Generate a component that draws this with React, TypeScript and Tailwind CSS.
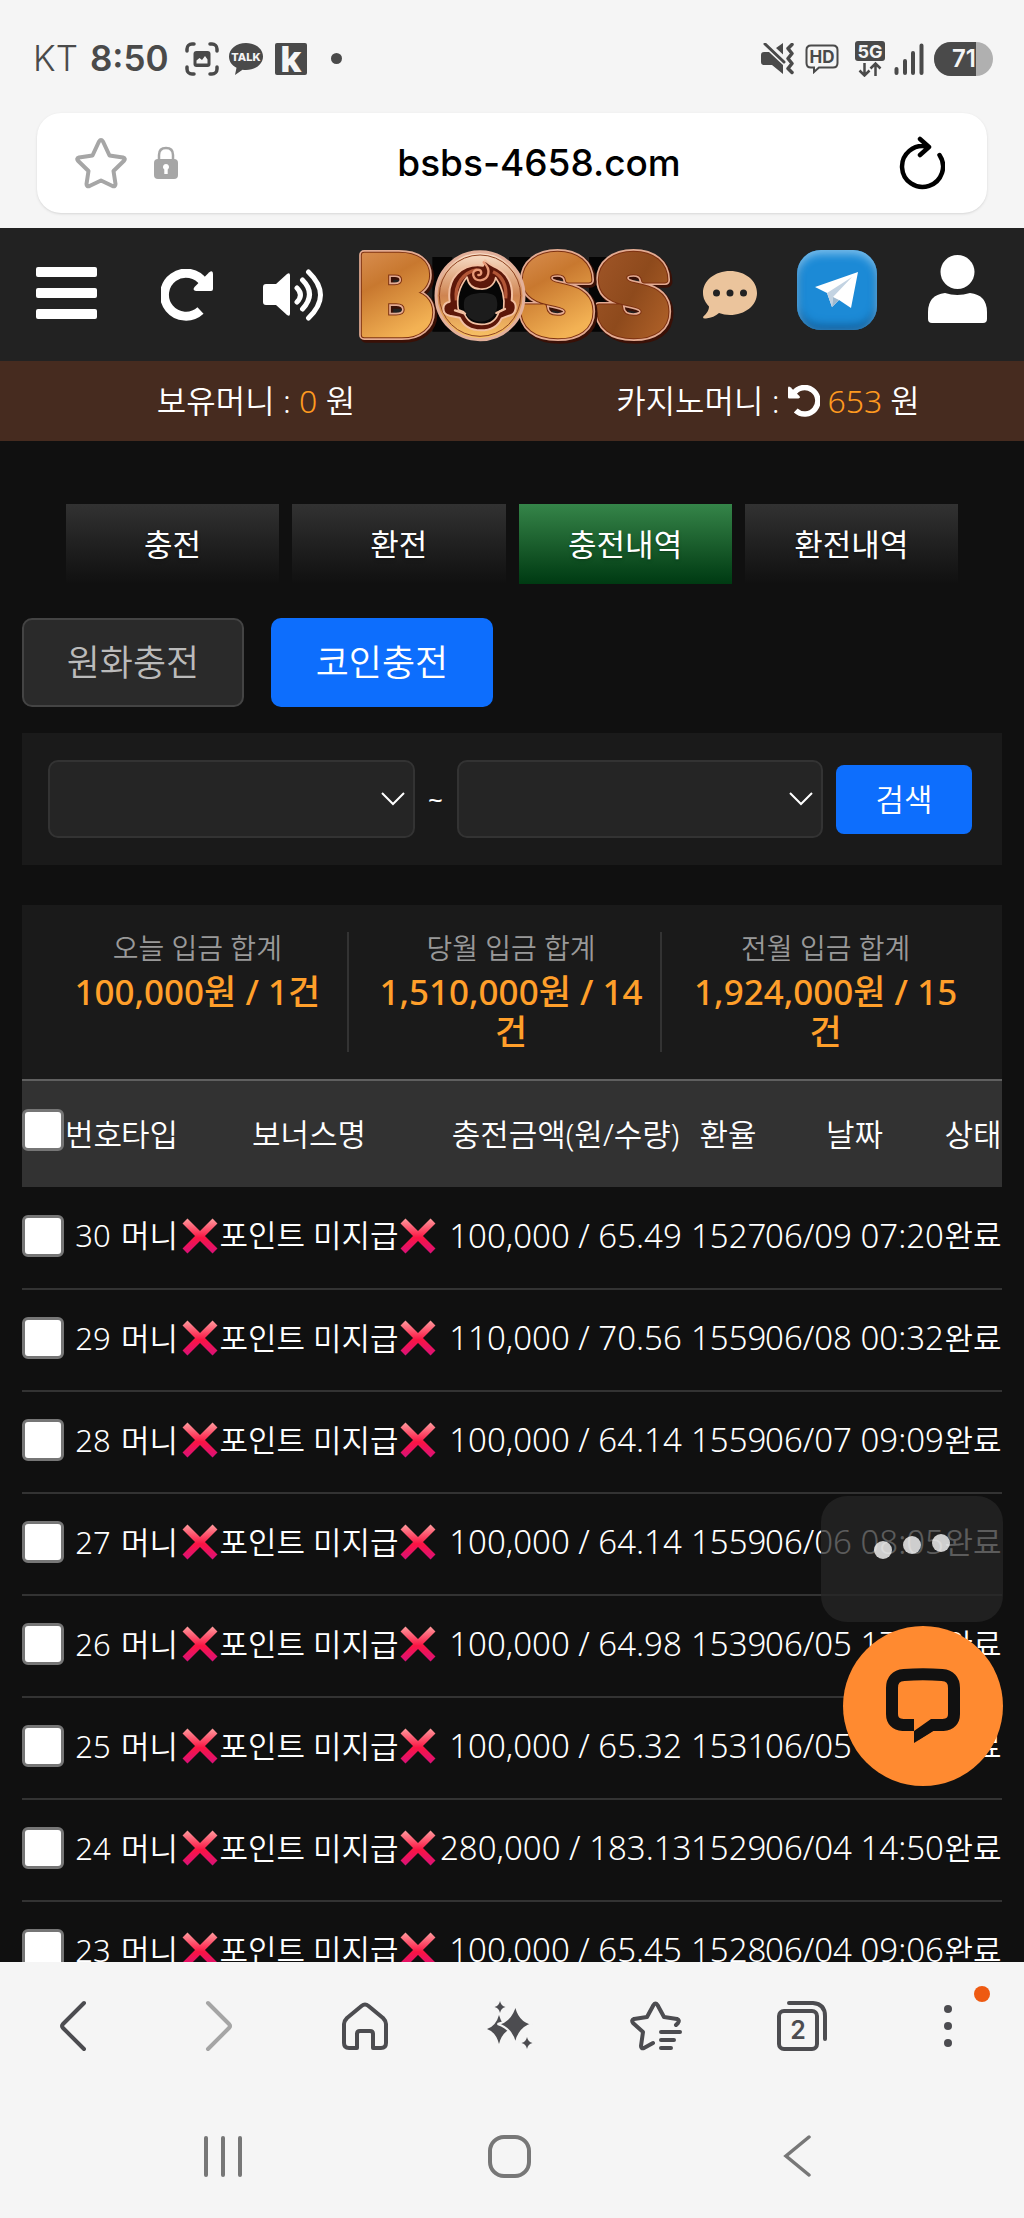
import * as React from 'react';
import clsx from 'clsx';

const tabs = ['충전', '환전', '충전내역', '환전내역'];

const totals = [
  { label: '오늘 입금 합계', value: '100,000원 / 1건' },
  { label: '당월 입금 합계', value: '1,510,000원 / 14건' },
  { label: '전월 입금 합계', value: '1,924,000원 / 15건' },
];

const deposits = [
  { no: 30, amount: '100,000 / 65.49', rate: '1527', date: '06/09 07:20' },
  { no: 29, amount: '110,000 / 70.56', rate: '1559', date: '06/08 00:32' },
  { no: 28, amount: '100,000 / 64.14', rate: '1559', date: '06/07 09:09' },
  { no: 27, amount: '100,000 / 64.14', rate: '1559', date: '06/06 08:05' },
  { no: 26, amount: '100,000 / 64.98', rate: '1539', date: '06/05 17:20' },
  { no: 25, amount: '100,000 / 65.32', rate: '1531', date: '06/05 10:12' },
  { no: 24, amount: '280,000 / 183.13', rate: '1529', date: '06/04 14:50' },
  { no: 23, amount: '100,000 / 65.45', rate: '1528', date: '06/04 09:06' },
];

export default function App() {
  return (
    <div className="flex h-screen flex-col overflow-hidden bg-[#f5f5f5] font-['Noto_Sans','Noto_Sans_CJK_KR',sans-serif]">
      <StatusBar />
      <AddressBar />
      <div className="relative min-h-0 flex-1 overflow-hidden bg-[#101010] text-white">
        <SiteHeader />
        <Balances />
        <main className="px-[22px] pt-[63px]">
          <Tabs />
          <div className="mt-[34px] flex gap-[27px]">
            <button className="h-[89px] w-[222px] rounded-[10px] border-2 border-[#444] bg-[#2a2a2a] text-[36px] font-[350] text-[#bbb]">
              원화충전
            </button>
            <button className="h-[89px] w-[222px] rounded-[10px] bg-[#0d6efd] text-[36px] font-[350]">
              코인충전
            </button>
          </div>
          <SearchForm />
          <Totals />
          <DepositTable />
        </main>
        <ChatWidget />
      </div>
      <BrowserToolbar />
      <SystemNav />
    </div>
  );
}

function StatusBar() {
  return (
    <div className="flex h-[113px] shrink-0 items-center justify-between pt-1 pr-[31px] pl-[33px] font-['Inter',sans-serif] text-[#4a4a4a]">
      <div className="flex items-center">
        <span className="text-[35px] font-light">KT</span>
        <span className="ml-3 text-[35px] font-semibold">8:50</span>
        <svg className="ml-4" width="34" height="34" viewBox="0 0 34 34" fill="none" stroke="currentColor" strokeWidth="3.5" strokeLinecap="round">
          <path d="M2 9V7a5 5 0 0 1 5-5h2M25 2h2a5 5 0 0 1 5 5v2M32 25v2a5 5 0 0 1-5 5h-2M9 32H7a5 5 0 0 1-5-5v-2" />
          <rect x="8.500" y="9" width="17" height="16" rx="3" fill="currentColor" stroke="none" />
          <path d="M11.500 21.500v-3l3-2.500 2.500 2 3-4 2.500 3.500v4z" fill="#f5f5f5" stroke="none" />
        </svg>
        <svg className="ml-[9px]" width="36" height="34" viewBox="0 0 36 34">
          <path d="M18 1C8.300 1 1 7 1 14.500c0 5 3 9 7.500 11.300L7 33l7.500-5.300c1.100.2 2.300.3 3.500.3 9.700 0 17-6 17-13.500S27.700 1 18 1z" fill="currentColor" />
          <text x="18" y="19" textAnchor="middle" fontSize="11" fontWeight="800" fill="#f5f5f5">TALK</text>
        </svg>
        <svg className="ml-[11px]" width="32" height="56" viewBox="0 -12 32 56">
          <rect width="32" height="32" rx="2" fill="currentColor" />
          <text x="16" y="29" textAnchor="middle" fontSize="36" fontWeight="800" fill="#f5f5f5">k</text>
        </svg>
        <span className="ml-6 size-[11px] rounded-full bg-[#4a4a4a]"></span>
      </div>
      <div className="flex items-center">
        <svg width="34" height="32" viewBox="0 0 34 32">
          <path d="M0 12q0-3 3-3h5L22 22v9L11 22H3q-3 0-3-3zM15 5l7-5v11.500z" fill="currentColor" />
          <path d="M4 1l19 18" stroke="currentColor" strokeWidth="3" strokeLinecap="round" />
          <path d="M31 1.500l-4 4 4 5-4 5 4 5-4 5 4 4" fill="none" stroke="currentColor" strokeWidth="3.500" strokeLinecap="round" strokeLinejoin="round" />
        </svg>
        <svg className="ml-[10px]" width="34" height="30" viewBox="0 0 34 30" fill="none" stroke="currentColor">
          <path d="M6 1.500h22q4.500 0 4.500 4.500v13q0 4.500-4.500 4.500H14L9 28v-4.500H6q-4.500 0-4.500-4.500V6Q1.500 1.500 6 1.500z" strokeWidth="2" />
          <text x="17" y="18.500" textAnchor="middle" fontSize="17" fontWeight="700" fill="currentColor" stroke="none">HD</text>
        </svg>
        <svg className="ml-4" width="30" height="36" viewBox="0 0 30 36">
          <rect width="30" height="20" rx="3" fill="currentColor" />
          <text x="15" y="16.500" textAnchor="middle" fontSize="18" fontWeight="700" fill="#f5f5f5">5G</text>
          <path d="M9.500 22v12M4.500 29.500l5 5 5-5M20.500 35V23M15.500 27.500l5-5 5 5" fill="none" stroke="currentColor" strokeWidth="2.500" />
        </svg>
        <svg className="ml-[9px]" width="30" height="32" viewBox="0 0 30 32" stroke="currentColor" strokeWidth="4" strokeLinecap="round">
          <path d="M2.500 26v4M11 18v12M19 10v20M27.500 2.500V30" />
        </svg>
        <div className="ml-[10px] flex h-[34px] w-[59px] overflow-hidden rounded-full bg-[#b0b0b0]">
          <span className="flex w-[42px] items-center justify-end bg-[#4a4a4a] text-[24px] leading-8 font-semibold text-[#f5f5f5]">71</span>
        </div>
      </div>
    </div>
  );
}

function AddressBar() {
  return (
    <div className="shrink-0 px-[37px] pb-[15px]">
      <div className="flex h-[100px] items-center rounded-[24px] bg-white px-[38px] shadow-sm">
        <button aria-label="즐겨찾기" className="text-[#a6a6a6]">
          <svg width="52" height="52" viewBox="0 0 52 52" fill="none" stroke="currentColor" strokeWidth="4" strokeLinejoin="round">
            <path d="M24 4.500q2-3 4 0l6.500 14 13.500 2q3 .8 1 3.300L38.500 34l2 13q0 3-3 2L26 43.500 14.500 49q-3 1-3-2l2-13L3 23.800q-2-2.500 1-3.300l13.500-2z" />
          </svg>
        </button>
        <svg className="ml-[26px] text-[#a6a6a6]" width="26" height="34" viewBox="0 0 26 34">
          <path d="M6 16V9q0-7 7-7t7 7v7" fill="none" stroke="currentColor" strokeWidth="2.500" />
          <rect x="1" y="13" width="24" height="20" rx="4" fill="currentColor" />
          <path d="M13 18a3 3 0 0 1 1.700 5.500V28h-3.400v-4.500A3 3 0 0 1 13 18z" fill="#fff" />
        </svg>
        <span className="flex-1 text-center font-['Inter',sans-serif] text-[37px] font-[550] text-black">bsbs-4658.com</span>
        <button aria-label="새로고침" className="mr-1">
          <svg width="46" height="54" viewBox="0 0 46 54" fill="none" stroke="#000" strokeWidth="4.500" strokeLinecap="round" strokeLinejoin="round">
            <path d="M40.500 19A20.500 20.500 0 1 1 28 10.500M21 3l9 8-9 8" />
          </svg>
        </button>
      </div>
    </div>
  );
}

function RotateIcon({ className }: { className?: string }) {
  return (
    <svg viewBox="0 0 52 52" className={className}>
      <path d="M39.500 41.500A21.500 21.500 0 1 1 43 14" fill="none" stroke="currentColor" strokeWidth="9" />
      <path d="M52 5v15q0 2-2 2H35q-4-1-1.500-4L48 3.500q4-3 4 1.500z" fill="currentColor" />
    </svg>
  );
}

function SiteHeader() {
  return (
    <header className="flex h-[133px] items-center bg-[#222] pr-[37px] pl-9">
      <button aria-label="메뉴" className="flex w-[61px] flex-col gap-[11px] pb-1">
        <span className="h-[10px] rounded-xs bg-white"></span>
        <span className="h-[10px] rounded-xs bg-white"></span>
        <span className="h-[10px] rounded-xs bg-white"></span>
      </button>
      <button aria-label="새로고침" className="ml-16">
        <RotateIcon className="size-[52px]" />
      </button>
      <button aria-label="소리" className="ml-[50px]">
        <svg width="62" height="52" viewBox="0 0 62 52">
          <path d="M3 15h10L24 5q3-2 3 1.500v38Q27 48 24 46L13 36H3q-3 0-3-3V18q0-3 3-3z" fill="#fff" />
          <path d="M34 19q7 7 0 14M39.500 11q14 14 0 29M45.500 3q24 23 0 46" fill="none" stroke="#fff" strokeWidth="5" strokeLinecap="round" />
        </svg>
      </button>
      <a href="#" className="flex flex-1 justify-center" aria-label="BOSS">
        <BossLogo />
      </a>
      <button aria-label="채팅">
        <svg width="54" height="48" viewBox="0 0 54 48">
          <path d="M27 0C12 0 0 9.500 0 22c0 5.500 2.500 9.500 6 13.500C6 40 3 43 0 46q0 2 3 1.500 8-1 13-5.500 5 2 11 2c15 0 27-9.500 27-22S42 0 27 0z" fill="#ebc49c" />
          <circle cx="13.500" cy="22" r="3.500" fill="#222" />
          <circle cx="27" cy="22" r="3.500" fill="#222" />
          <circle cx="40.500" cy="22" r="3.500" fill="#222" />
        </svg>
      </button>
      <button
        aria-label="텔레그램"
        className="mb-[10px] ml-10 flex size-20 items-center justify-center rounded-[24px] bg-[#1c8ad6] shadow-[inset_0_4px_8px_#7cbfec,inset_0_-5px_8px_#125f9c]"
      >
        <svg width="46" height="38" viewBox="0 0 46 38">
          <path d="M1 16L44 1l-7 36-12-8-7 7-5-14z" fill="#fff" />
          <path d="M13 22L38 6 19 26l-1 10z" fill="#c3d3e2" />
          <path d="M19 26l6 3-7 7z" fill="#9fb9cf" />
        </svg>
      </button>
      <button aria-label="내 정보" className="mb-3 ml-[51px]">
        <svg width="59" height="68" viewBox="0 0 59 68" fill="#fff">
          <circle cx="29.500" cy="17" r="17" />
          <path d="M17 38q12 4 25 0 17 2 17 19v7q0 4-4 4H4q-4 0-4-4v-7Q0 40 17 38z" />
        </svg>
      </button>
    </header>
  );
}

// each letter is stacked: dark side, light rim, groove, metal face
function BossLetter({ x, face, children }: { x: number; face: string; children: string }) {
  return (
    <>
      <text x={x + 5} y="305" fill="#3a1006" stroke="#3a1006" strokeWidth="34">{children}</text>
      <text x={x} y="300" fill="#e3ab92" stroke="#e3ab92" strokeWidth="30">{children}</text>
      <text x={x} y="300" fill="#7d3010" stroke="#7d3010" strokeWidth="20">{children}</text>
      <text x={x} y="300" fill={face} stroke={face} strokeWidth="14">{children}</text>
    </>
  );
}

function BossLogo() {
  return (
    <svg width="330" height="160" viewBox="0 -60 990 480" className="-mx-3 -my-6 shrink-0 font-['Inter',sans-serif]" fontSize="330" fontWeight="900" strokeLinejoin="round">
      <defs>
        <linearGradient id="gold" x1="0" y1="0" x2="0.300" y2="1">
          <stop offset="0" stopColor="#e29a62" />
          <stop offset="0.450" stopColor="#c8782f" />
          <stop offset="0.900" stopColor="#f3b254" />
        </linearGradient>
        <linearGradient id="copper" x1="0" y1="0" x2="1" y2="1">
          <stop offset="0" stopColor="#a4582a" />
          <stop offset="0.500" stopColor="#8e4a1c" />
          <stop offset="1" stopColor="#b9682c" />
        </linearGradient>
        <linearGradient id="ring" x1="0" y1="0" x2="0" y2="1">
          <stop offset="0" stopColor="#fbe3cf" />
          <stop offset="0.500" stopColor="#cf8450" />
          <stop offset="1" stopColor="#fbc666" />
        </linearGradient>
      </defs>
      <path d="M250 66h60v224h-60zM480 66h70v224h-70zM720 66h60v224h-60z" fill="#050505" />
      <BossLetter x={30} face="url(#gold)">B</BossLetter>
      <BossLetter x={741} face="url(#copper)">S</BossLetter>
      <BossLetter x={513} face="url(#gold)">S</BossLetter>
      <circle cx="393" cy="182" r="132" fill="url(#ring)" stroke="#e3b09a" strokeWidth="9" />
      <circle cx="393" cy="182" r="122" fill="none" stroke="#8f4220" strokeWidth="3" />
      <path d="M302 200C292 128 340 84 402 92l6-16c12 10 16 14 26 18 42 16 60 56 54 102 18 8 16 42-8 46l-22 8c-12 26-34 36-62 36s-52-12-64-38l-30-6c-26-6-24-38 0-42z" fill="#5c1709" stroke="#f2c0a2" strokeWidth="6" />
      <path d="M322 196c-6-50 22-84 62-92M470 190c4-38-10-68-38-80" fill="none" stroke="#b25636" strokeWidth="10" />
      <path d="M354 126c-22 28-32 64-26 98l16 6c10 30 28 38 54 38s44-12 52-38l14-8c4-36-4-66-24-94-4 24-24 36-46 34-22 0-36-12-40-36z" fill="#060606" stroke="#f2c0a2" strokeWidth="5" />
      <path d="M346 196c-8 40 18 64 50 64s58-30 46-70c-4-24-92-20-96 6z" fill="#1c1c1c" />
      <path d="M404 82c24 22 16 52-10 54-24 0-30-30-8-32 14 0 14 18 2 16" fill="none" stroke="#e89a78" strokeWidth="7" strokeLinecap="round" />
      <path d="M318 226l30 10M468 222l-26 12" stroke="#f2c0a2" strokeWidth="7" strokeLinecap="round" />
    </svg>
  );
}

function Balances() {
  return (
    <div className="grid h-20 grid-cols-2 items-center bg-[#462b1f] text-[32px] font-[350]">
      <p className="text-center">
        보유머니 : <span className="text-[#ff9a1f]">0</span> 원
      </p>
      <p className="flex items-center justify-center gap-2">
        <span>카지노머니 :</span>
        <button aria-label="카지노머니 새로고침">
          <RotateIcon className="size-8 -scale-x-100" />
        </button>
        <span className="text-[#ff9a1f]">653</span>
        <span>원</span>
      </p>
    </div>
  );
}

function Tabs() {
  return (
    <nav className="grid grid-cols-4 gap-[13px] px-11">
      {tabs.map((tab) => (
        <button
          key={tab}
          className={clsx(
            'h-20 bg-linear-to-b text-[31px] font-normal text-shadow-md',
            tab === '충전내역' ? 'from-[#358549] to-[#003a12]' : 'from-[#323232] to-[#101010]'
          )}
        >
          {tab}
        </button>
      ))}
    </nav>
  );
}

function SearchForm() {
  return (
    <form className="mt-[26px] flex h-[132px] items-center bg-[#1a1a1a] pr-[30px] pl-[26px]">
      <DateSelect label="시작일" />
      <span className="w-[42px] text-center text-[26px]">~</span>
      <DateSelect label="종료일" />
      <button type="button" className="ml-[13px] h-[69px] w-[136px] rounded-[8px] bg-[#0d6efd] text-[31px] font-[350]">
        검색
      </button>
    </form>
  );
}

function DateSelect({ label }: { label: string }) {
  return (
    <div className="relative flex-1">
      <select aria-label={label} className="block h-[78px] w-full appearance-none rounded-[10px] border-2 border-[#333] bg-[#252525] px-4 text-[31px]">
        <option value=""></option>
      </select>
      <svg className="pointer-events-none absolute top-8 right-[10px]" width="24" height="14" viewBox="0 0 24 14" fill="none" stroke="#fff" strokeWidth="2">
        <path d="M1 1l11 11L23 1" />
      </svg>
    </div>
  );
}

function Totals() {
  return (
    <section className="mt-10 grid grid-cols-3 gap-[13px] bg-[#1a1a1a] px-[26px] py-[27px] text-center">
      {totals.map((total, idx) => (
        <div key={total.label} className={clsx('px-[14px]', idx < 2 && 'border-r-2 border-[#333]')}>
          <p className="text-[28px] leading-8 font-[350] text-[#999]">{total.label}</p>
          <p className="mt-2 text-[35px] leading-10 font-medium text-[#ff9f2a]">{total.value}</p>
        </div>
      ))}
    </section>
  );
}

function DepositTable() {
  return (
    <table className="w-full table-fixed border-collapse text-center text-[31px] font-[350] whitespace-nowrap">
      <colgroup>
        <col className="w-[43px]" />
        <col className="w-[56px]" />
        <col className="w-[57px]" />
        <col className="w-[262px]" />
        <col className="w-[251px]" />
        <col className="w-[74px]" />
        <col className="w-[179px]" />
        <col className="w-[58px]" />
      </colgroup>
      <thead>
        <tr className="h-[107px] border-t-2 border-[#606060] bg-[#323232]">
          <th className="p-0 pb-2">
            <Tick label="전체 선택" />
          </th>
          <th className="p-0 font-[350]">번호</th>
          <th className="p-0 font-[350]">타입</th>
          <th className="p-0 font-[350]">보너스명</th>
          <th className="p-0 font-[350]">충전금액(원/수량)</th>
          <th className="p-0 font-[350]">환율</th>
          <th className="p-0 font-[350]">날짜</th>
          <th className="p-0 font-[350]">상태</th>
        </tr>
      </thead>
      <tbody>
        {deposits.map((row) => (
          <tr key={row.no} className="h-[102px] border-b-2 border-[#333]">
            <td className="p-0 pb-1">
              <Tick label={`${row.no}번 선택`} />
            </td>
            <td className="p-0 pb-1">{row.no}</td>
            <td className="p-0 pb-1">머니</td>
            <td className="p-0 pb-1">
              <span className="flex items-center justify-center gap-px">
                <CrossMark />
                포인트 미지급
                <CrossMark />
              </span>
            </td>
            <td className="p-0 pb-1 text-[33px]">{row.amount}</td>
            <td className="p-0 pb-1 text-[33px]">{row.rate}</td>
            <td className="p-0 pb-1 text-[33px]">{row.date}</td>
            <td className="p-0 pb-1">완료</td>
          </tr>
        ))}
      </tbody>
    </table>
  );
}

function Tick({ label }: { label: string }) {
  return (
    <input
      type="checkbox"
      aria-label={label}
      className="block size-[42px] appearance-none rounded-[6px] border-3 border-[#767676] bg-white checked:bg-[#0d6efd]"
    />
  );
}

function CrossMark() {
  return (
    <svg width="36" height="36" viewBox="0 0 36 36" className="shrink-0">
      <defs>
        <linearGradient id="cross" x1="0" y1="0" x2="0" y2="36" gradientUnits="userSpaceOnUse">
          <stop offset="0" stopColor="#ffa0a0" />
          <stop offset="0.550" stopColor="#fb1443" />
          <stop offset="1" stopColor="#d8117c" />
        </linearGradient>
      </defs>
      <path d="M3 3l30 30M33 3L3 33" stroke="url(#cross)" strokeWidth="7" />
    </svg>
  );
}

// live chat launcher with its typing bubble, floats over the table
function ChatWidget() {
  return (
    <div className="absolute right-[21px] bottom-[176px] flex flex-col items-end gap-1">
      <div className="h-[126px] w-[182px] rounded-[26px] bg-[#262626]/75">
        <svg width="182" height="126" viewBox="0 0 182 126" fill="#fff" fillOpacity="0.780">
          <circle cx="62" cy="54" r="9" />
          <circle cx="91" cy="49" r="9" />
          <circle cx="120" cy="47" r="9" />
        </svg>
      </div>
      <button aria-label="상담 채팅" className="flex size-40 items-center justify-center rounded-full bg-[#ff8a30]">
        <svg width="76" height="76" viewBox="0 0 76 76" fill="none" stroke="#111">
          <path d="M29 57H18Q7 56 7 46V20Q7 8 19 7q19-1.500 38 0 12 1 12 13v26q0 10-11 11H46L31 66.500" strokeWidth="12" />
          <path d="M29 50v25l21-13V50H46z" fill="#111" stroke="none" />
          <path d="M29 38v25l17-12h8V38z" fill="#ff8a30" stroke="none" />
        </svg>
      </button>
    </div>
  );
}

function BrowserToolbar() {
  return (
    <nav className="relative grid h-32 shrink-0 grid-cols-7 place-items-center pr-[3px] text-[#4c4c50]">
      <button aria-label="뒤로">
        <svg width="28" height="52" viewBox="0 0 28 52" fill="none" stroke="currentColor" strokeWidth="4" strokeLinecap="round" strokeLinejoin="round">
          <path d="M25 3L4 24q-2 2 0 4l21 21" />
        </svg>
      </button>
      <button aria-label="앞으로" className="text-[#a5a5a5]">
        <svg width="28" height="52" viewBox="0 0 28 52" fill="none" stroke="currentColor" strokeWidth="4" strokeLinecap="round" strokeLinejoin="round">
          <path d="M3 3l21 21q2 2 0 4L3 49" />
        </svg>
      </button>
      <button aria-label="홈">
        <svg width="46" height="48" viewBox="0 0 46 48" fill="none" stroke="currentColor" strokeWidth="4" strokeLinejoin="round">
          <path d="M19.500 4q3.500-3 7 0L41 16q3 3 3 6v19q0 5-5 5h-8V32q0-3-3-3H18q-3 0-3 3v14H7q-5 0-5-5V22q0-3 3-6z" />
        </svg>
      </button>
      <button aria-label="AI 도우미">
        <svg width="46" height="50" viewBox="0 0 46 50" fill="currentColor">
          <path d="M12 14q3 11 12 14-9 3-12 15-3-12-12-15 9-3 12-14z" />
          <path d="M28.500 3q3 17 17 20-14 4-17 20-4-16-18-20 14-3 18-20z" stroke="#f5f5f5" strokeWidth="2" />
          <path d="M13 0q1 5 5.500 6Q14 7 13 12q-1-5-5.500-6Q12 5 13 0zM40 36q1 5 5.500 6-4.500 1-5.500 6-1-5-5.500-6 4.500-1 5.500-6z" />
        </svg>
      </button>
      <button aria-label="북마크">
        <svg width="52" height="50" viewBox="0 0 52 50" fill="none" stroke="currentColor" strokeWidth="4" strokeLinecap="round" strokeLinejoin="round">
          <path d="M46 24l2-2q2-3-1-4l-13-2-6.500-12q-2-3-4 0L17 16 4 18q-3 1-1 4l10 9-2 14q0 3 3 2l9-5" />
          <path d="M31 31h19M31 39h13M31 47h10" />
        </svg>
      </button>
      <button aria-label="탭 2개">
        <svg width="50" height="50" viewBox="0 0 50 50" fill="none" stroke="currentColor" strokeWidth="4" strokeLinecap="round">
          <rect x="2" y="10" width="38" height="38" rx="5" />
          <path d="M12 2h24q12 1 12 13v23" />
          <text x="21" y="38" textAnchor="middle" fontFamily="Inter" fontSize="25" fontWeight="600" fill="currentColor" stroke="none">2</text>
        </svg>
      </button>
      <button aria-label="더보기" className="flex flex-col gap-[9px]">
        <span className="size-2 rounded-full bg-[#4c4c50]"></span>
        <span className="size-2 rounded-full bg-[#4c4c50]"></span>
        <span className="size-2 rounded-full bg-[#4c4c50]"></span>
      </button>
      <span className="absolute top-6 right-[34px] size-4 rounded-full bg-[#ee5a12]"></span>
    </nav>
  );
}

function SystemNav() {
  return (
    <nav className="grid h-32 shrink-0 grid-cols-3 place-items-center pt-1 pr-[84px] pl-20 text-[#777]">
      <button aria-label="최근 앱" className="flex gap-[13px]">
        <span className="h-[41px] w-1 rounded-full bg-[#777]"></span>
        <span className="h-[41px] w-1 rounded-full bg-[#777]"></span>
        <span className="h-[41px] w-1 rounded-full bg-[#777]"></span>
      </button>
      <button aria-label="홈 화면" className="size-[43px] rounded-[16px] border-4 border-[#777]"></button>
      <button aria-label="이전">
        <svg width="28" height="44" viewBox="0 0 28 44" fill="none" stroke="currentColor" strokeWidth="3.500" strokeLinecap="round">
          <path d="M26 3L3 22l23 19" />
        </svg>
      </button>
    </nav>
  );
}
